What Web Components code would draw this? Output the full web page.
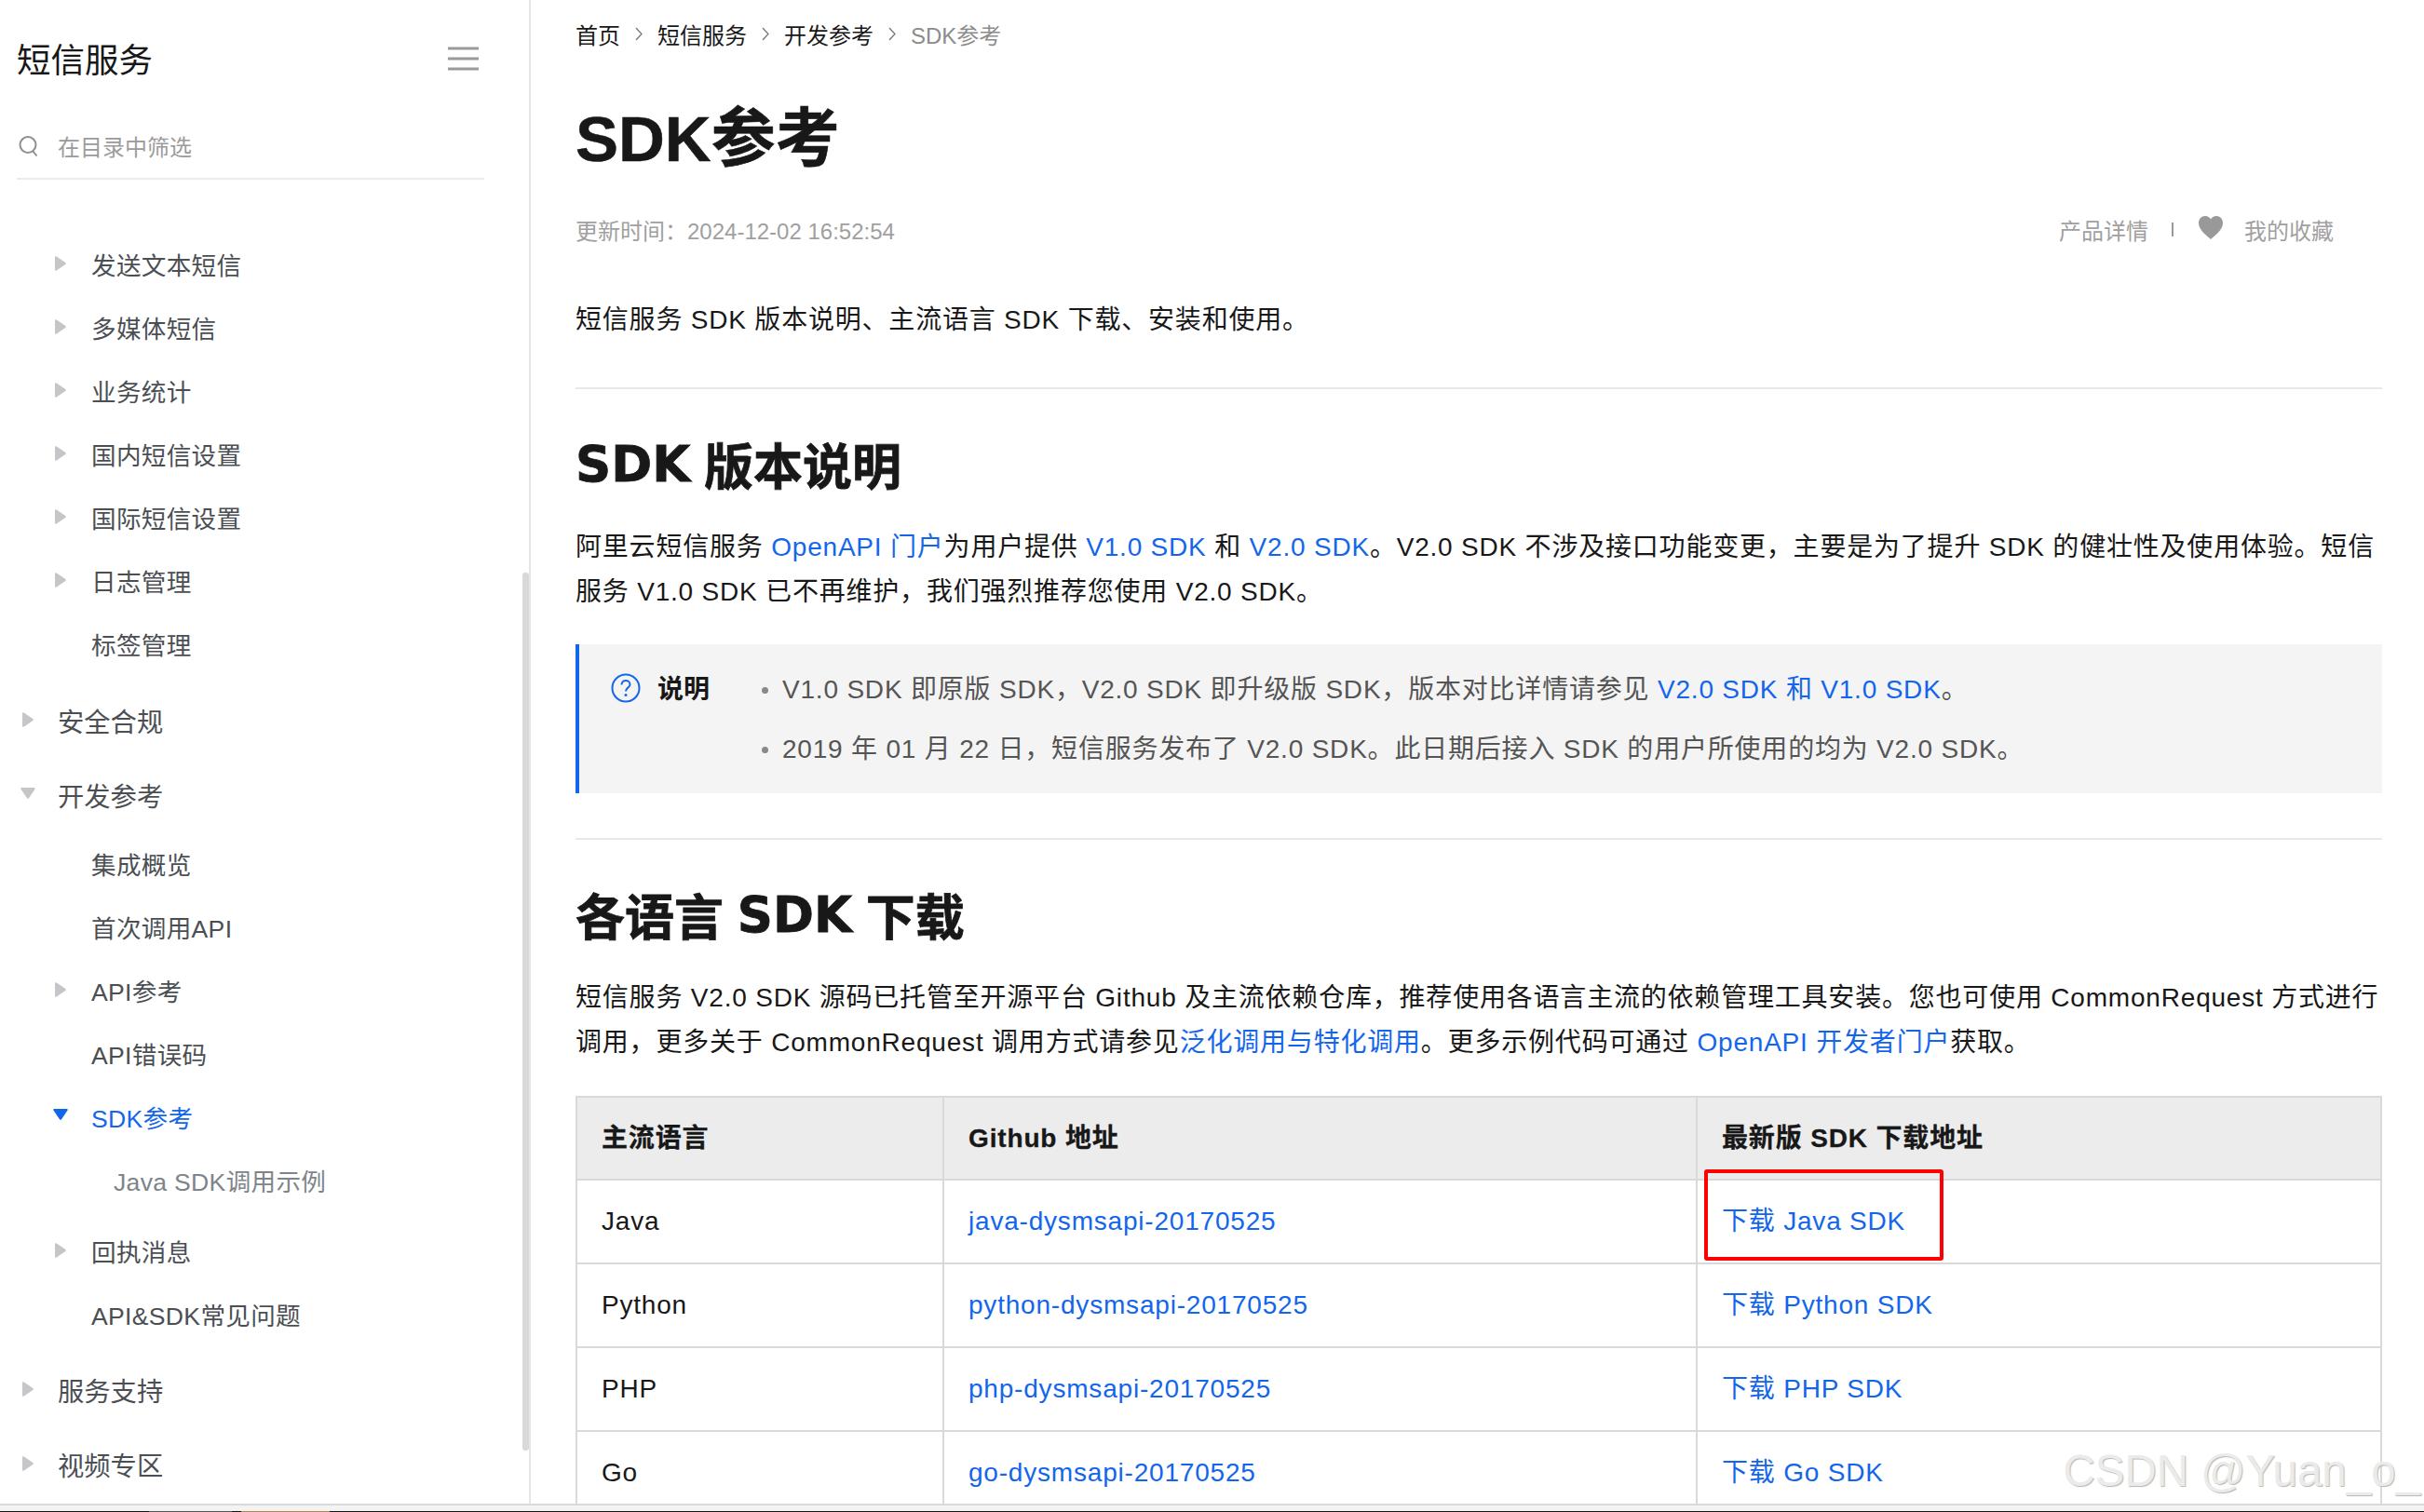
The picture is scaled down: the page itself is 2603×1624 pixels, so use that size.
<!DOCTYPE html>
<html lang="zh-CN"><head><meta charset="utf-8"><title>SDK参考</title>
<style>
html,body{margin:0;padding:0;height:100%;overflow:hidden;background:#fff}
body{font-family:"Liberation Sans","Noto Sans CJK SC",sans-serif}
</style></head><body>
<doc-app></doc-app>
<script>
const FONT='"Liberation Sans","Noto Sans CJK SC",sans-serif';
function def(name,html,init){
  customElements.define(name,class extends HTMLElement{
    constructor(){super();this.attachShadow({mode:'open'}).innerHTML=html;}
    connectedCallback(){init&&init(this)}
  });
}
def('nav-item',`<style>
:host{display:flex;align-items:center;height:68px;font-size:26.6px;letter-spacing:.3px;color:#4b4f54;white-space:nowrap;position:relative}
:host([level="1"]){height:80px;padding-left:62px;font-size:28.3px;letter-spacing:0}
:host([level="2"]){padding-left:98px}
:host([level="3"]){padding-left:122px;color:#7e848a}
:host([active]){color:#1366ec}
svg{position:absolute;top:50%;margin-top:-8px;width:12px;height:16px;left:59px;fill:#c4c6c9}
:host([level="1"]) svg{left:24px}
:host([open]) svg{transform:rotate(90deg);margin-top:-9px}
:host([active]) svg{fill:#1366ec;margin-top:-10px}
</style><svg viewBox="0 0 12 16"><path d="M0 1.500Q0 -.5 1.800 .6L11.300 7q1 1 0 2L1.800 15.400Q0 16.500 0 14.500Z"/></svg><slot></slot>`,
el=>{ if(!el.hasAttribute('arrow')) el.shadowRoot.querySelector('svg').style.display='none'; });

def('side-bar',`<style>
:host{display:block;width:568px;height:100%;flex:none;border-right:2px solid #e6e6e6;position:relative;overflow:hidden}
.head{display:flex;align-items:center;justify-content:space-between;height:124px;padding:0 54px 0 18px;font-size:36.500px;color:#181818}
.search{display:flex;align-items:center;gap:21px;margin:0 48px 0 18px;padding:0 0 2px 2px;height:65px;border-bottom:2px solid #ebebeb;font-size:24px;color:#9b9b9b}
.list{padding-top:56px}
.sb{position:absolute;right:0;top:615px;width:7px;height:943px;background:#d9d9d9;border-radius:3px}
.head svg{display:block;margin-top:2px}
</style>
<div class="head"><span>短信服务</span><svg width="33" height="26" viewBox="0 0 33 26"><path d="M0 2h33M0 13h33M0 24h33" stroke="#9a9a9a" stroke-width="3"/></svg></div>
<div class="search"><svg width="21" height="24" viewBox="0 0 21 24" fill="none" stroke="#8f8f8f" stroke-width="2"><circle cx="10" cy="10.500" r="8.500"/><path d="M15.500 17.500l4 5"/></svg><span>在目录中筛选</span></div>
<div class="list"><slot></slot></div>
<div class="sb"></div>`);

const chev=`<span class="c"><svg width="8" height="15" viewBox="0 0 8 15" fill="none" stroke="#777" stroke-width="1.300"><path d="M1 1l6 6.500-6 6.500"/></svg></span>`;
def('bread-crumb',`<style>
:host{display:flex;align-items:center;height:72px;font-size:24px;color:#181818}
span.c{margin:0 16px;display:flex}
.last{color:#8c8c8c}
</style><span>首页</span>${chev}<span>短信服务</span>${chev}<span>开发参考</span>${chev}<span class="last">SDK参考</span>`);

def('page-meta',`<style>
:host{display:flex;align-items:center;justify-content:space-between;height:40px;font-size:24px;color:#a0a0a0;padding-right:52px}
.r{display:flex;align-items:center}
.sep{width:2px;height:15px;background:#999;margin:0 27px 0 25px}
svg{display:block;margin-right:23px;margin-top:-4px}
</style><span>更新时间：2024-12-02 16:52:54</span><div class="r"><span>产品详情</span><i class="sep"></i><svg width="26" height="25" viewBox="0 0 26 25"><path fill="#999" d="M13 25C9 21.500 0 15 0 7.500 0 3 3.200 0 7 0c2.600 0 4.800 1.300 6 3.400C14.200 1.300 16.400 0 19 0c3.800 0 7 3 7 7.500C26 15 17 21.500 13 25z"/></svg><span>我的收藏</span></div>`);

def('doc-heading',`<style>
:host{display:flex;align-items:center;height:96px;font-size:53px;font-weight:700;color:#181818;-webkit-text-stroke:.8px #181818;white-space:pre}
::slotted(b){font-family:"DejaVu Sans",sans-serif;font-weight:700}
</style><slot></slot>`);

def('doc-para',`<style>
:host{display:block;font-size:28px;letter-spacing:.8px;line-height:47.500px;color:#181818}
::slotted(a){color:#1366ec;text-decoration:none}
</style><slot></slot>`);

def('note-box',`<style>
:host{display:flex;box-sizing:border-box;height:160px;background:#f4f4f4;border-left:4px solid #1366ec;padding:14px 0 0 34px;color:#555;font-size:28px;letter-spacing:.8px}
.lab{display:flex;align-items:center;height:64px;gap:18px;width:162px;flex:none;font-weight:700;color:#181818;letter-spacing:0}
.lab svg{display:block;flex:none;margin-top:2px}
</style>
<div class="lab"><svg width="32" height="32" viewBox="0 0 32 32" fill="none"><circle cx="16" cy="16" r="14.500" stroke="#1366ec" stroke-width="2"/><path d="M11.500 12.500c0-2.800 2-4.500 4.500-4.500s4.500 1.700 4.500 4.200c0 3.300-4.500 3.600-4.500 7.300" stroke="#1366ec" stroke-width="2"/><circle cx="16" cy="23.500" r="1.500" fill="#1366ec"/></svg><span>说明</span></div>
<div><slot></slot></div>`);

def('note-line',`<style>
:host{display:flex;align-items:center;height:64px;white-space:nowrap;gap:15px}
i{width:7px;height:7px;border-radius:50%;background:#888;flex:none;margin-top:6px}
::slotted(a){color:#1366ec;text-decoration:none}
</style><i></i><span><slot></slot></span>`);

def('h-rule',`<style>:host{display:block;height:2px;background:#e8e8e8}</style>`);

def('data-table',`<style>
:host{display:grid;grid-template-columns:394px 809px 735px;border-top:2px solid #d9d9d9;border-left:2px solid #d9d9d9;font-size:28px;letter-spacing:.8px;color:#181818;position:relative}
</style><slot></slot>`);

def('t-cell',`<style>
:host{display:flex;align-items:center;box-sizing:border-box;height:90px;line-height:32px;padding-left:26px;border-right:2px solid #d9d9d9;border-bottom:2px solid #d9d9d9;white-space:nowrap;overflow:hidden}
:host([head]){height:89px;background:#ececec;font-weight:700;letter-spacing:.85px;-webkit-text-stroke:.3px #181818}
::slotted(a){color:#1366ec;text-decoration:none}
</style><slot></slot>`);

def('red-mark',`<style>:host{position:absolute;left:1210px;top:77px;width:257px;height:98px;box-sizing:border-box;border:4px solid #f00;border-radius:3px;pointer-events:none}</style>`);

def('water-mark',`<style>:host{position:absolute;right:4px;top:1556px;font-size:47.500px;line-height:47px;color:#ebebeb;text-shadow:1px 1px 1px #b5b5b5;white-space:nowrap;font-family:"Liberation Sans",sans-serif}</style><slot></slot>`);

def('doc-main',`<style>
:host{display:block;flex:1;min-width:0;padding:0 45px 0 48px;overflow:hidden;position:relative}
</style><slot></slot>`);

def('task-strip',`<style>
:host{display:flex;height:1px;flex:none;background:#141414}
i{display:block;height:1px}
.a{width:160px}.b{width:89px;background:#555}.c{width:10px}.d{width:95px;background:#b5814d}
</style><i class="a"></i><i class="b"></i><i class="c"></i><i class="d"></i>`);

def('doc-app',`<style>
:host{display:flex;flex-direction:column;height:1624px;width:2603px;font-family:${FONT};overflow:hidden;position:relative}
.row{display:flex;flex:1;min-height:0}
.foot{height:8px;flex:none;box-sizing:border-box;border-top:2px solid #d9d9d9;background:#f3f3f3}
a{color:#1366ec;text-decoration:none}
</style>
<div class="row">
<side-bar>
<nav-item level="2" arrow>发送文本短信</nav-item>
<nav-item level="2" arrow>多媒体短信</nav-item>
<nav-item level="2" arrow>业务统计</nav-item>
<nav-item level="2" arrow>国内短信设置</nav-item>
<nav-item level="2" arrow>国际短信设置</nav-item>
<nav-item level="2" arrow>日志管理</nav-item>
<nav-item level="2">标签管理</nav-item>
<nav-item level="1" arrow style="margin-top:8px">安全合规</nav-item>
<nav-item level="1" arrow open>开发参考</nav-item>
<nav-item level="2">集成概览</nav-item>
<nav-item level="2">首次调用API</nav-item>
<nav-item level="2" arrow>API参考</nav-item>
<nav-item level="2">API错误码</nav-item>
<nav-item level="2" arrow open active>SDK参考</nav-item>
<nav-item level="3">Java SDK调用示例</nav-item>
<nav-item level="2" arrow style="margin-top:8px">回执消息</nav-item>
<nav-item level="2">API&amp;SDK常见问题</nav-item>
<nav-item level="1" arrow style="margin-top:7px">服务支持</nav-item>
<nav-item level="1" arrow>视频专区</nav-item>
</side-bar>
<doc-main>
<bread-crumb></bread-crumb>
<div style="height:142px;display:flex;align-items:center;font-size:69px;font-weight:700;color:#181818;white-space:nowrap;-webkit-text-stroke:.5px #181818">SDK参考</div>
<div style="height:12px"></div>
<page-meta></page-meta>
<div style="height:50px"></div>
<div style="display:flex;align-items:center;height:50px;font-size:28px;letter-spacing:.8px;color:#181818">短信服务 SDK 版本说明、主流语言 SDK 下载、安装和使用。</div>
<div style="height:50px"></div>
<h-rule></h-rule>
<div style="height:32px"></div>
<doc-heading><b>SDK</b> 版本说明</doc-heading>
<div style="height:18px"></div>
<doc-para>阿里云短信服务 <a>OpenAPI 门户</a>为用户提供 <a>V1.0 SDK</a> 和 <a>V2.0 SDK</a>。V2.0 SDK 不涉及接口功能变更，主要是为了提升 SDK 的健壮性及使用体验。短信服务 V1.0 SDK 已不再维护，我们强烈推荐您使用 V2.0 SDK。</doc-para>
<div style="height:33px"></div>
<note-box>
<note-line>V1.0 SDK 即原版 SDK，V2.0 SDK 即升级版 SDK，版本对比详情请参见 <a>V2.0 SDK 和 V1.0 SDK</a>。</note-line>
<note-line>2019 年 01 月 22 日，短信服务发布了 V2.0 SDK。此日期后接入 SDK 的用户所使用的均为 V2.0 SDK。</note-line>
</note-box>
<div style="height:48px"></div>
<h-rule></h-rule>
<div style="height:32px"></div>
<doc-heading>各语言 <b>SDK</b> 下载</doc-heading>
<div style="height:18px"></div>
<doc-para>短信服务 V2.0 SDK 源码已托管至开源平台 Github 及主流依赖仓库，推荐使用各语言主流的依赖管理工具安装。您也可使用 CommonRequest 方式进行调用，更多关于 CommonRequest 调用方式请参见<a>泛化调用与特化调用</a>。更多示例代码可通过 <a>OpenAPI 开发者门户</a>获取。</doc-para>
<div style="height:34px"></div>
<data-table>
<t-cell head>主流语言</t-cell><t-cell head>Github 地址</t-cell><t-cell head>最新版 SDK 下载地址</t-cell>
<t-cell>Java</t-cell><t-cell><a>java-dysmsapi-20170525</a></t-cell><t-cell><a>下载 Java SDK</a></t-cell>
<t-cell>Python</t-cell><t-cell><a>python-dysmsapi-20170525</a></t-cell><t-cell><a>下载 Python SDK</a></t-cell>
<t-cell>PHP</t-cell><t-cell><a>php-dysmsapi-20170525</a></t-cell><t-cell><a>下载 PHP SDK</a></t-cell>
<t-cell>Go</t-cell><t-cell><a>go-dysmsapi-20170525</a></t-cell><t-cell><a>下载 Go SDK</a></t-cell>
<red-mark></red-mark>
</data-table>
</doc-main>
</div>
<div class="foot"></div>
<task-strip></task-strip>
<water-mark>CSDN @Yuan_o_</water-mark>`);
</script>
</body></html>
